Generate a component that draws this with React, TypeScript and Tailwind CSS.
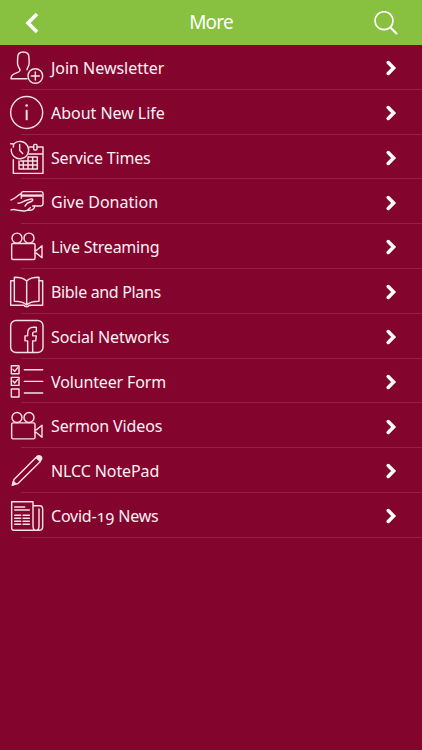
import type { ReactNode } from "react";

type Item = { label: ReactNode; spacing: string; icon: ReactNode; viewTop: number };

const camera = (
  <>
    <circle cx="51" cy="43" r="15" />
    <circle cx="87" cy="43" r="15" />
    <rect x="35" y="59" width="70" height="48" rx="4" />
    <path d="M105 80h4l17-14v36l-17-14h-4" />
  </>
);

const items: Item[] = [
  {
    label: "Join Newsletter",
    spacing: "tracking-[-0.03px]",
    viewTop: 3,
    icon: (
      <>
        <path d="M81 104H33c0-10 4-13 13-16 9-3 15-5 14-10-1-5-6-9-7-17-1-6 0-12 0-20 0-11 7-17 17-17s17 6 17 17c0 8 1 14 0 20-1 8-6 10-6 16" />
        <circle cx="106" cy="96" r="22" />
        <path d="M106 84v24M94 96h24" />
      </>
    ),
  },
  {
    label: "About New Life",
    spacing: "tracking-[-0.03px]",
    viewTop: 137.4,
    icon: (
      <>
        <circle cx="80" cy="205" r="48" />
        <path d="M80 197v31" strokeWidth="6" strokeLinecap="butt" />
        <circle cx="80" cy="184" r="4" fill="currentColor" stroke="none" />
      </>
    ),
  },
  {
    label: "Service Times",
    spacing: "tracking-[-0.21px]",
    viewTop: 1.8,
    icon: (
      <>
        <path d="M40 76v41h89V38h-17M101 38H88M86 59h43" />
        <rect x="101" y="30" width="10" height="17" rx="3" />
        <path d="M41 29a26 26 0 1 1-7 15M32 28l9 1-1 9M59 30v18l9 9" />
        <path d="M57 80v24h55V68H84M57 92h55M62 80h50M70 80v24M84 68v36M98 68v36" />
      </>
    ),
  },
  {
    label: "Give Donation",
    spacing: "tracking-[0.02px]",
    viewTop: 136.2,
    icon: (
      <>
        <path d="M33 199c12-2 18-13 31-20M33 229c8-3 13-1 20 1l18 2c8 1 14-3 20-10M64 194v-14c0-4 2-6 6-6h53c4 0 6 2 6 6v30c0 5-2 7-6 7H98" />
        <path d="M65 186h62" strokeWidth="7" strokeLinecap="butt" />
        <path d="M54 209c12 0 16-7 25-9l15-4c5-1 6 5 1 7l-13 6-7 8M82 230h10c7 0 12-8 12-13" />
      </>
    ),
  },
  { label: "Live Streaming", spacing: "tracking-[-0.23px]", viewTop: 0.6, icon: camera },
  {
    label: "Bible and Plans",
    spacing: "tracking-[-0.34px]",
    viewTop: 135,
    icon: (
      <>
        <path d="M80 171c-8-8-21-11-37-11v72c16 0 29 3 37 11 8-8 21-11 37-11v-72c-16 0-29 3-37 11v72" />
        <path d="M43 170H32v74h40c2 6 14 6 16 0h40v-74h-11" />
      </>
    ),
  },
  {
    label: "Social Networks",
    spacing: "tracking-[-0.08px]",
    viewTop: -0.6,
    icon: (
      <>
        <rect x="32" y="19" width="97" height="96" rx="16" />
        <path d="M83 114V80h-8V65h8v-8c0-12 6-18 17-18h9v14h-6c-4 0-5 2-5 6v6h11l-2 15h-9v34" />
      </>
    ),
  },
  {
    label: "Volunteer Form",
    spacing: "tracking-[-0.14px]",
    viewTop: 133.8,
    icon: (
      <>
        <path d="M34 154h23v24H34zM34 189h23v24H34zM34 224h23v24H34zM73 166h55M73 201h55M73 236h55" />
        <path d="m39 165 5 6 9-11M39 200l5 6 9-11" />
      </>
    ),
  },
  { label: "Sermon Videos", spacing: "tracking-[-0.14px]", viewTop: -0.6, icon: camera },
  {
    label: "NLCC NotePad",
    spacing: "tracking-[-0.1px]",
    viewTop: 132.6,
    icon: (
      <>
        <path d="m37 244 5-17 66-66 13 12-67 66z" />
        <path d="m37 244 3-11 7 7zM110 159c4-4 9-4 13-1 3 4 3 8-1 12z" fill="currentColor" />
      </>
    ),
  },
  {
    label: (
      <>
        Covid-<span className="inline-block origin-[50%_82%] scale-y-[0.8]">1</span>
        <span className="relative top-[3px]">9</span> News
      </>
    ),
    spacing: "tracking-[-0.22px]",
    viewTop: 267,
    icon: (
      <>
        <path d="M99 305v-12H35v79c0 4 3 7 7 7h75c7 0 11-4 11-11v-53c0-7-4-10-9-10H99v60c0 8 3 14 9 14s9-6 9-13v-51" />
        <path d="M44 309h30M44 318h44M44 334h18M44 343h18M44 352h18M44 361h18M69 334h19M69 343h19M69 352h19M69 361h19" />
      </>
    ),
  },
];

function Row({ item }: { item: Item }) {
  return (
    <li className="relative flex h-[44.8px] items-center text-[#fff0f5]">
      <svg
        className="h-[44.8px] w-12 shrink-0 text-[#f8dfe8]"
        viewBox={`0 ${item.viewTop} 144 134.4`}
        fill="none"
        stroke="currentColor"
        strokeWidth="4.3"
        strokeLinecap="round"
        strokeLinejoin="round"
      >
        {item.icon}
      </svg>
      <span className={`ml-[3px] flex-1 whitespace-nowrap pt-[1.4px] text-base ${item.spacing}`}>{item.label}</span>
      <svg
        className="mr-[25px] mt-[1.5px] h-4 w-3 text-white"
        viewBox="0 0 12 16"
        fill="none"
        stroke="currentColor"
        strokeWidth="3.6"
        strokeLinecap="round"
      >
        <path d="m3.2 2.6 5.4 5.4-5.4 5.4" />
      </svg>
      <div className="absolute bottom-0 left-[21px] right-0 h-px bg-[#932143]" />
    </li>
  );
}

export default function App() {
  return (
    <main className="h-[750px] w-[422px] overflow-hidden bg-[#83042d] font-['Noto_Sans',sans-serif]">
      <header className="grid h-[45px] grid-cols-3 items-center bg-[#88c040] text-white">
        <svg className="ml-[25px] h-[22px] w-[14px]" viewBox="0 0 14 22" fill="none" stroke="currentColor" strokeWidth="3.6">
          <path d="m12 2-9 9 9 9" />
        </svg>
        <h1 className="text-center text-[19px] tracking-[-0.8px]">More</h1>
        <svg className="mr-6 h-6 w-6 justify-self-end" viewBox="0 0 24 24" fill="none" stroke="currentColor" strokeWidth="1.7">
          <circle cx="10" cy="9.7" r="9" />
          <path d="m16 16 7 7" strokeWidth="2.2" />
        </svg>
      </header>
      <ul>
        {items.map((item, index) => (
          <Row key={index} item={item} />
        ))}
      </ul>
    </main>
  );
}
